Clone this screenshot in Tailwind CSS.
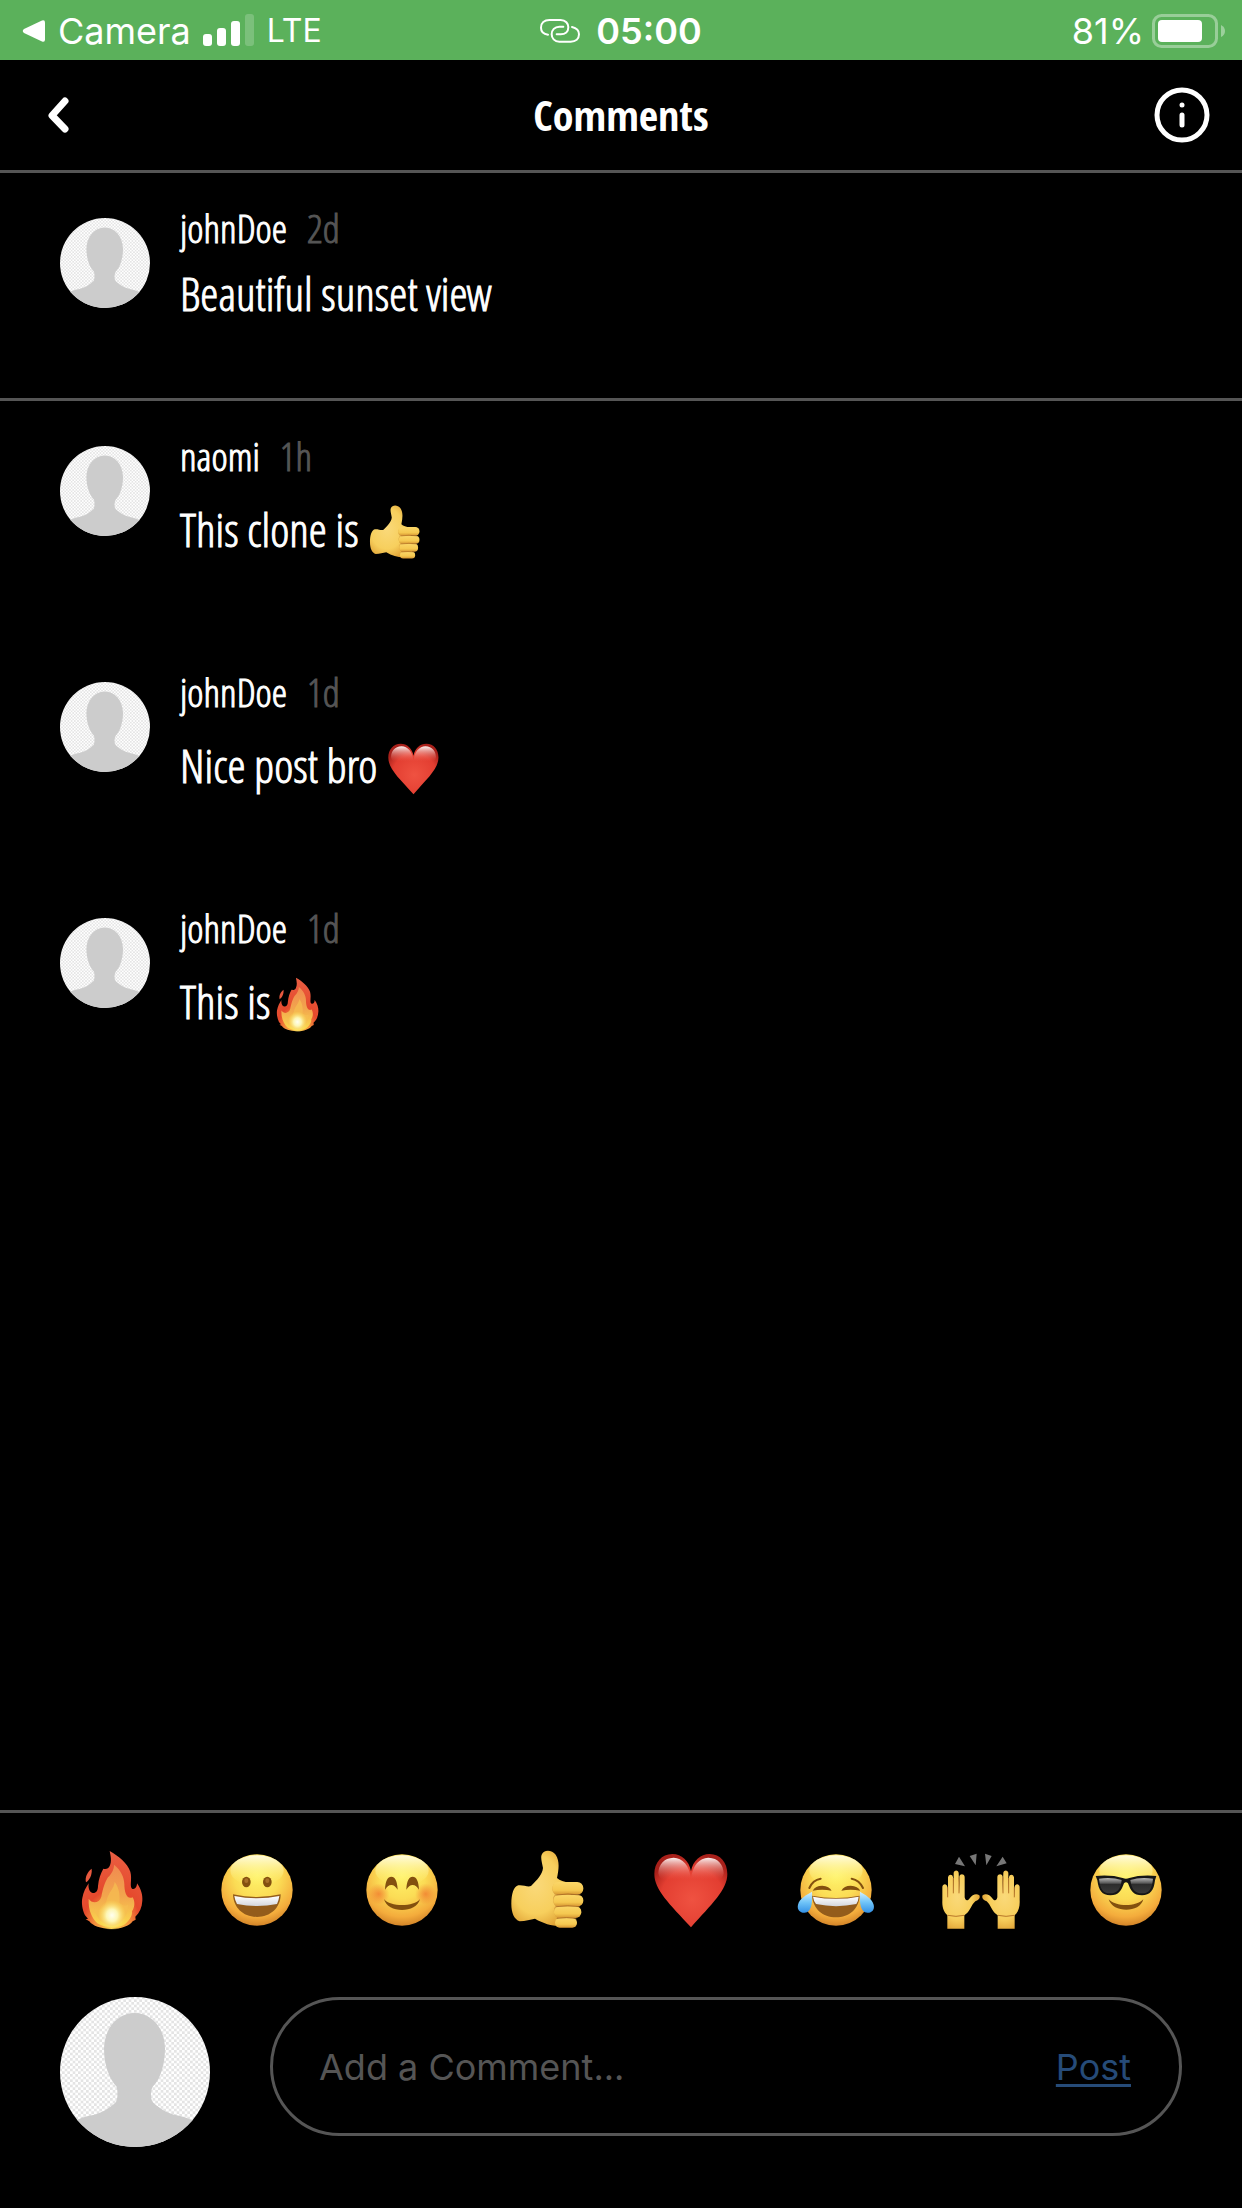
<!DOCTYPE html>
<html lang="en">
<head>
<meta charset="utf-8">
<meta name="viewport" content="width=device-width, initial-scale=1">
<title>Comments</title>
<script src="https://cdn.jsdelivr.net/npm/@tailwindcss/browser@4"></script>
</head>
<body class="flex min-h-screen flex-col bg-black text-white font-['Open_Sans_Condensed_Light','Open_Sans_Condensed','Open_Sans',sans-serif]">

<svg class="absolute size-0" aria-hidden="true">
  <defs>
    <radialGradient id="face" cx=".5" cy=".3" r=".72">
      <stop offset="0" stop-color="#fff36a"/><stop offset=".45" stop-color="#fbdc55"/><stop offset=".8" stop-color="#f4ac3c"/><stop offset="1" stop-color="#cf7f26"/>
    </radialGradient>
    <linearGradient id="shine" x1="0" y1="0" x2="0" y2="1">
      <stop offset="0" stop-color="#fffde8" stop-opacity=".95"/><stop offset="1" stop-color="#fff56b" stop-opacity="0"/>
    </linearGradient>
    <linearGradient id="teeth" x1="0" y1="0" x2="0" y2="1">
      <stop offset="0" stop-color="#fff"/><stop offset="1" stop-color="#d4d6dc"/>
    </linearGradient>
    <radialGradient id="blush"><stop offset="0" stop-color="#f0782e" stop-opacity=".75"/><stop offset="1" stop-color="#f0782e" stop-opacity="0"/></radialGradient>
    <radialGradient id="flame" cx=".5" cy="1" r="1">
      <stop offset="0" stop-color="#f9cf4c"/><stop offset=".3" stop-color="#f3903c"/><stop offset=".5" stop-color="#e5492c"/><stop offset="1" stop-color="#ea5f43"/>
    </radialGradient>
    <linearGradient id="flamein" x1="0" y1="0" x2="0" y2="1">
      <stop offset="0" stop-color="#f08a50"/><stop offset=".5" stop-color="#f2a54d"/><stop offset="1" stop-color="#fbdc4e"/>
    </linearGradient>
    <radialGradient id="core"><stop offset="0" stop-color="#fffff0"/><stop offset=".4" stop-color="#fdf6b4"/><stop offset="1" stop-color="#fbe35a" stop-opacity="0"/></radialGradient>
    <radialGradient id="skin" cx=".4" cy=".45" r=".65"><stop offset="0" stop-color="#fad97a"/><stop offset=".6" stop-color="#f7cf5d"/><stop offset="1" stop-color="#dc9a2e"/></radialGradient>
    <linearGradient id="finger" x1="0" y1="0" x2="0" y2="1"><stop offset="0" stop-color="#fbd768"/><stop offset=".65" stop-color="#f5c850"/><stop offset="1" stop-color="#d79632"/></linearGradient>
    <radialGradient id="heartfill" cx=".52" cy=".62" r=".62"><stop offset="0" stop-color="#ef5241"/><stop offset=".7" stop-color="#e33e31"/><stop offset="1" stop-color="#a8201a"/></radialGradient>
    <linearGradient id="gloss" x1="0" y1="0" x2="0" y2="1"><stop offset="0" stop-color="#fff" stop-opacity=".95"/><stop offset=".9" stop-color="#f06a5c" stop-opacity="0"/></linearGradient>
    <linearGradient id="tearfill" x1="0" y1="0" x2="0" y2="1"><stop offset="0" stop-color="#d6f1ff"/><stop offset=".5" stop-color="#71c5f8"/><stop offset="1" stop-color="#3391e6"/></linearGradient>
    <linearGradient id="lens" x1="0" y1="0" x2="0" y2="1"><stop offset="0" stop-color="#b9b9b9"/><stop offset=".35" stop-color="#555"/><stop offset=".4" stop-color="#2c2c2c"/><stop offset="1" stop-color="#3a3a3a"/></linearGradient>
    <pattern id="checks" width="16" height="16" patternUnits="userSpaceOnUse"><path fill="#fff" d="M0 0h16v16H0z"/><path fill="#e4e4e4" d="M0 0h8v8H0zM8 8h8v8H8z"/></pattern>
    <clipPath id="disc"><circle cx="315" cy="306" r="225"/></clipPath>
  </defs>

  <symbol id="avatar" viewBox="90 81 450 450">
    <g clip-path="url(#disc)">
      <path fill="url(#checks)" d="M90 81h450v450H90z"/>
      <path fill="#ccc" d="M314 129C364 129 404 172 405 236C405 280 392 328 368 350C361 364 361 386 368 396C388 416 412 430 440 436C460 440 476 446 500 456V540H130V456C150 444 166 440 186 436C214 430 240 414 258 396C264 384 263 362 260 350C236 324 222 280 222 236C224 172 264 129 314 129Z"/>
    </g>
  </symbol>

  <symbol id="base" viewBox="0 0 240 240">
    <circle cx="120" cy="120" r="107" fill="url(#face)"/>
    <ellipse cx="120" cy="62" rx="80" ry="46" fill="url(#shine)"/>
  </symbol>

  <symbol id="fire" viewBox="40 150 240 240">
    <path fill="#e8593f" d="M99 206C101 226 92 240 82 247C78 232 86 216 99 206Z"/>
    <path fill="url(#flame)" d="M153 153C180 168 206 190 215 215C221 238 212 258 220 266C228 270 235 262 235 250C248 268 252 286 251 302C250 322 243 338 230 350L231 359L222 364C212 378 188 387 158 387C126 386 102 378 92 364L81 358L88 356L79 346C71 330 68 308 71 294C74 276 82 262 90 250C88 264 92 276 102 279C112 280 118 272 118 258C120 236 126 220 134 206C142 208 150 206 153 198C160 184 156 168 153 153Z"/>
    <path fill="url(#flamein)" d="M166 194C188 212 196 232 197 252C197 276 204 300 222 292C230 306 228 322 220 334C222 348 210 366 194 376C170 386 138 384 116 370C100 354 88 330 90 296C100 312 122 310 128 290C134 262 138 248 148 232C158 222 166 210 166 194Z"/>
    <path fill="#f6bd52" opacity=".75" d="M168 246C182 264 184 286 182 308C194 318 202 318 208 314C208 342 194 370 164 378C130 376 112 352 108 326C124 338 140 322 144 300C150 276 166 266 168 246Z"/>
    <ellipse cx="160" cy="346" rx="42" ry="46" fill="url(#core)"/>
  </symbol>

  <symbol id="grin" viewBox="0 0 240 240">
    <use href="#base"/>
    <ellipse cx="88" cy="96" rx="13" ry="16" fill="#83500f"/><ellipse cx="151" cy="96" rx="13" ry="16" fill="#83500f"/>
    <ellipse cx="88" cy="92" rx="6" ry="7" fill="#a87029"/><ellipse cx="151" cy="92" rx="6" ry="7" fill="#a87029"/>
    <path fill="#935c1b" d="M48 133Q120 149 191 133C191 174 160 201 120 201C80 201 49 174 48 133Z"/>
    <path fill="url(#teeth)" d="M52 138Q120 152 187 138Q185 152 180 162Q120 174 60 162Q54 152 52 138Z"/>
  </symbol>

  <symbol id="smile" viewBox="0 0 240 240">
    <use href="#base"/>
    <circle cx="50" cy="132" r="32" fill="url(#blush)"/><circle cx="191" cy="132" r="32" fill="url(#blush)"/>
    <path fill="#83500f" d="M69 119C70 92 77 80 88 80C99 80 106 92 107 119C101 110 96 105 88 105C80 105 75 110 69 119ZM133 119C134 92 141 80 152 80C163 80 170 92 171 119C165 110 160 105 152 105C144 105 139 110 133 119Z"/>
    <path fill="#83500f" d="M66 147C84 171 156 171 174 147C164 191 76 191 66 147Z"/>
  </symbol>

  <symbol id="thumb" viewBox="142 150 240 240">
    <path fill="url(#skin)" d="M176 256C190 254 204 262 214 258C232 240 248 224 250 204C248 190 242 174 246 164C252 148 276 148 288 164C300 182 298 206 292 234C300 242 314 246 330 248L340 370L300 378C276 378 250 370 226 356C212 358 198 364 180 364C164 358 155 340 155 312C155 282 162 260 176 256Z"/>
    <path fill="#be7c29" opacity=".55" d="M284 252C274 262 278 276 286 284C276 294 280 310 288 318C278 330 284 346 292 352C286 362 286 372 292 379L310 380L304 252Z"/>
    <g fill="url(#finger)">
      <rect x="286" y="354" width="66" height="29" rx="14"/><rect x="283" y="318" width="82" height="36" rx="17"/><rect x="281" y="284" width="90" height="35" rx="17"/><rect x="278" y="246" width="93" height="38" rx="18"/>
    </g>
    <path fill="none" stroke="#a86a24" stroke-width="2.5" d="M290 285Q324 279 362 285M290 320Q324 315 360 320M292 355Q320 351 350 355"/>
  </symbol>

  <symbol id="heart" viewBox="574 150 240 240">
    <path fill="url(#heartfill)" d="M694 214C700 182 722 162 750 162C782 162 803 188 803 222C803 270 756 312 694 382C630 312 584 270 584 222C584 188 606 162 638 162C666 162 688 182 694 214Z"/>
    <path fill="url(#gloss)" d="M694 238C690 194 668 174 642 173C612 174 597 194 596 220C600 250 640 250 694 238ZM694 238C698 194 720 174 746 173C776 174 791 194 792 220C788 250 750 250 694 238Z"/>
  </symbol>

  <symbol id="joy" viewBox="0 0 240 240">
    <use href="#base"/>
    <path fill="none" stroke="#83500f" stroke-linecap="round" stroke-width="6" d="M40 114Q50 90 74 86M201 114Q190 90 167 86"/>
    <path fill="#83500f" d="M50 122Q58 107 79 107Q100 108 107 122Q78 116 50 122ZM136 122Q144 107 164 107Q186 108 193 122Q164 116 136 122Z"/>
    <path fill="#935c1b" d="M48 137Q120 151 191 137C189 176 160 202 120 202C80 202 51 176 48 137Z"/>
    <path fill="url(#teeth)" d="M51 140Q120 153 188 140Q187 154 181 162Q120 175 60 162Q53 154 51 140Z"/>
    <path fill="url(#tearfill)" d="M48 125C32 134 10 146 6 164C2 180 14 189 26 188C46 186 50 162 48 125ZM192 125C208 134 228 146 233 164C237 180 226 189 214 188C194 186 190 162 192 125Z"/>
  </symbol>

  <symbol id="hands" viewBox="543 150 240 240">
    <path fill="#777" d="M597 170L585 192L615 199ZM629 168L650 161L647 196ZM675 161L695 168L679 196ZM728 170L740 190L709 199Z"/>
    <g id="hand">
      <path fill="url(#skin)" d="M562 386L562 346C550 334 546 320 547 300V260C548 250 561 250 562 260L564 290V232C566 222 578 222 579 232L581 278V218C584 209 594 210 596 218L598 278V230C600 220 612 221 614 230L614 292C616 302 622 304 628 296C638 282 650 280 658 286C662 294 656 300 646 304C634 314 630 336 613 346V386Z"/>
      <path fill="none" stroke="#b9772a" stroke-width="3" d="M563 262V292M580 234V280M597 232V280M563 346Q588 352 612 346"/>
    </g>
    <use href="#hand" transform="translate(1326 0) scale(-1 1)"/>
  </symbol>

  <symbol id="cool" viewBox="0 0 240 240">
    <use href="#base"/>
    <path fill="#83500f" d="M68 148C88 171 152 171 172 148C162 190 80 190 68 148Z"/>
    <path fill="#161616" d="M29 78Q76 74 110 84Q120 88 130 84Q164 74 211 78L207 91C204 122 192 136 168 136C142 136 134 122 126 100Q120 94 114 100C106 122 98 136 73 136C48 136 38 122 34 91Z"/>
    <path fill="url(#lens)" d="M39 86Q76 80 107 90C104 118 94 130 73 130C50 130 42 116 39 86ZM133 90Q164 80 201 86C198 116 190 130 168 130C146 130 137 118 133 90Z"/>
  </symbol>
</svg>

<div class="flex h-[60px] items-center justify-between bg-[#5bb15b] px-[16px] pt-[2px] font-[Inter,sans-serif] text-[36px] leading-none" role="status">
  <div class="flex flex-1 items-center">
    <svg class="ml-[6px] h-[24px] w-[24px]" viewBox="0 0 24 24" fill="#fff" aria-hidden="true"><path d="M2 10L20 1.5Q23 .5 23 3.500V20.500Q23 23.500 20 22.500L2 14Q-.5 12 2 10Z"/></svg>
    <span class="ml-[12px]">Camera</span>
    <svg class="ml-[12px] h-[34px] w-[52px]" viewBox="0 0 52 34" fill="#fff" aria-hidden="true"><rect y="20" width="9" height="12" rx="3"/><rect x="14" y="14" width="9" height="18" rx="3"/><rect x="28" y="7" width="9" height="25" rx="3"/><rect x="42" width="9" height="32" rx="3" opacity=".2"/></svg>
    <span class="ml-[12px] text-[32px]">LTE</span>
  </div>
  <div class="flex items-center gap-[16px]">
    <svg class="h-[24px] w-[40px]" viewBox="0 0 120 72" fill="none" stroke="#fff" stroke-width="6" stroke-linecap="round" aria-hidden="true"><path d="M24 47C10 45 3 37 3 26C3 12 13 3 28 3H62C77 3 85 14 85 25C85 38 76 46 62 46H50"/><path d="M96 24C110 27 117 35 117 46C117 60 107 68 92 68H58C43 68 35 57 35 46C35 33 44 23 58 23H70"/></svg>
    <span class="font-semibold">05:00</span>
  </div>
  <div class="flex flex-1 items-center justify-end">
    <span>81%</span>
    <svg class="ml-[8px] h-[34px] w-[74px]" viewBox="0 0 74 34" aria-hidden="true"><rect x="1.500" y="1.500" width="63" height="31" rx="8" fill="none" stroke="#fff" stroke-opacity=".38" stroke-width="3"/><rect x="6" y="6" width="44" height="22" rx="4" fill="#fff"/><path d="M69 11Q73 13 73 17T69 23Z" fill="#fff" fill-opacity=".4"/></svg>
  </div>
</div>

<header class="flex h-[113px] items-center justify-between border-b-3 border-[#555] px-[32px]">
  <div class="flex flex-1"><button type="button" aria-label="Back" class="pl-[14px]"><svg class="block h-[36px] w-[24px]" viewBox="0 0 24 36" fill="none" stroke="#fff" stroke-width="7" stroke-linecap="round" stroke-linejoin="round"><path d="M19 4L6 18.500L19 32"/></svg></button></div>
  <h1 class="font-['Open_Sans_Condensed','Open_Sans',sans-serif] text-[42px] leading-[60px]">Comments</h1>
  <div class="flex flex-1 justify-end"><button type="button" aria-label="Information"><svg class="block size-[56px]" viewBox="0 0 56 56" fill="none" stroke="#fff" stroke-width="5" stroke-linecap="round"><circle cx="28" cy="28" r="25"/><path d="M28 28V38"/><circle cx="28" cy="18" r="2.500" fill="#fff" stroke="none"/></svg></button></div>
</header>

<main class="flex-1 [-webkit-text-stroke:1px]">
  <article class="flex gap-[30px] border-b-3 border-[#555] px-[60px] pb-[75px] pt-[30px]">
    <svg class="mt-[15px] size-[90px] shrink-0" role="img" aria-label="johnDoe"><use href="#avatar"/></svg>
    <div>
      <div class="flex gap-[20px] text-[39px] leading-[50px]"><h2>johnDoe</h2><time class="text-[#555]">2d</time></div>
      <p class="mt-[10px] text-[46px] leading-[60px]">Beautiful sunset view</p>
    </div>
  </article>

  <ul>
    <li class="flex gap-[30px] px-[60px] pb-[78px] pt-[30px]">
      <svg class="mt-[15px] size-[90px] shrink-0" role="img" aria-label="naomi"><use href="#avatar"/></svg>
      <div>
        <div class="flex gap-[20px] text-[39px] leading-[50px]"><h2>naomi</h2><time class="text-[#555]">1h</time></div>
        <p class="mt-[18px] h-[60px] text-[46px] leading-[60px]">This clone is <svg class="inline-block size-[55px] align-[-13px]" role="img" aria-label="thumbs up"><use href="#thumb"/></svg></p>
      </div>
    </li>
    <li class="flex gap-[30px] px-[60px] pb-[78px] pt-[30px]">
      <svg class="mt-[15px] size-[90px] shrink-0" role="img" aria-label="johnDoe"><use href="#avatar"/></svg>
      <div>
        <div class="flex gap-[20px] text-[39px] leading-[50px]"><h2>johnDoe</h2><time class="text-[#555]">1d</time></div>
        <p class="mt-[18px] h-[60px] text-[46px] leading-[60px]">Nice post bro <svg class="inline-block size-[55px] align-[-13px]" role="img" aria-label="red heart"><use href="#heart"/></svg></p>
      </div>
    </li>
    <li class="flex gap-[30px] px-[60px] pb-[78px] pt-[30px]">
      <svg class="mt-[15px] size-[90px] shrink-0" role="img" aria-label="johnDoe"><use href="#avatar"/></svg>
      <div>
        <div class="flex gap-[20px] text-[39px] leading-[50px]"><h2>johnDoe</h2><time class="text-[#555]">1d</time></div>
        <p class="mt-[18px] h-[60px] text-[46px] leading-[60px]">This is<svg class="inline-block size-[55px] align-[-13px]" role="img" aria-label="fire"><use href="#fire"/></svg></p>
      </div>
    </li>
  </ul>
</main>

<footer class="border-t-3 border-[#555] pb-[61px] pt-[37px]">
  <div class="grid grid-cols-8 justify-items-center pl-[40px] pr-[44px]">
    <button type="button" aria-label="Fire"><svg class="block size-[80px]"><use href="#fire"/></svg></button>
    <button type="button" aria-label="Grinning face"><svg class="block size-[80px]"><use href="#grin"/></svg></button>
    <button type="button" aria-label="Smiling face"><svg class="block size-[80px]"><use href="#smile"/></svg></button>
    <button type="button" aria-label="Thumbs up"><svg class="block size-[80px]"><use href="#thumb"/></svg></button>
    <button type="button" aria-label="Red heart"><svg class="block size-[80px]"><use href="#heart"/></svg></button>
    <button type="button" aria-label="Tears of joy"><svg class="block size-[80px]"><use href="#joy"/></svg></button>
    <button type="button" aria-label="Raised hands"><svg class="block size-[80px]"><use href="#hands"/></svg></button>
    <button type="button" aria-label="Sunglasses face"><svg class="block size-[80px]"><use href="#cool"/></svg></button>
  </div>
  <form class="mt-[67px] flex items-start gap-[60px] px-[60px]">
    <svg class="size-[150px] shrink-0" role="img" aria-label="Your avatar"><use href="#avatar"/></svg>
    <div class="flex h-[139px] flex-1 items-center rounded-full border-3 border-[#555] pl-[46px] pr-[48px] font-[Inter,sans-serif] text-[36px] leading-[44px]">
      <input type="text" aria-label="Add a comment" placeholder="Add a Comment..." class="min-w-0 flex-1 bg-transparent outline-none placeholder:text-[#555]">
      <button type="submit" class="text-[#264b78] underline decoration-3 underline-offset-4">Post</button>
    </div>
  </form>
</footer>
</body>
</html>
